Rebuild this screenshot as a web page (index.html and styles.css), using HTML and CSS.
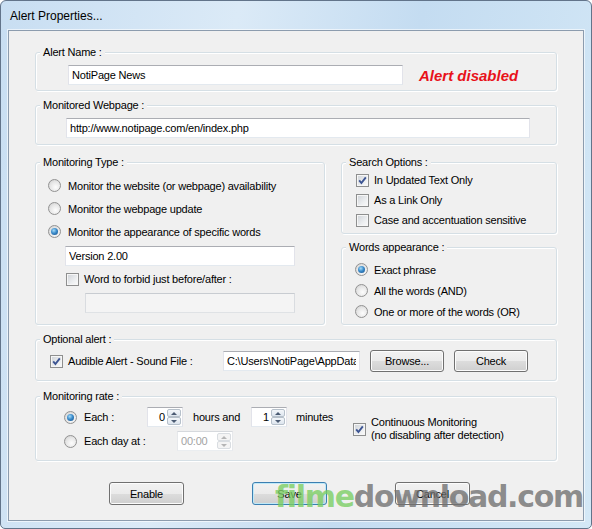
FILE: index.html
```html
<!DOCTYPE html>
<html lang="en">
<head>
  <meta charset="UTF-8" />
  <meta name="viewport" content="width=device-width, initial-scale=1.0" />
  <title>Alert Properties</title>
  <link rel="stylesheet" href="styles.css">
</head>
<body>
  <div class="window">
    <div class="titlebar">Alert Properties...</div>
    <div class="client">

      <div class="group group-name">
        <div class="group-title">Alert Name :</div>
        <div class="group-body">
          <input class="textbox name-box" type="text" value="NotiPage News">
          <span class="status">Alert disabled</span>
        </div>
      </div>

      <div class="group group-url">
        <div class="group-title">Monitored Webpage :</div>
        <div class="group-body">
          <input class="textbox url-box" type="text" value="http://www.notipage.com/en/index.php">
        </div>
      </div>

      <div class="columns">
        <div class="group group-type">
          <div class="group-title">Monitoring Type :</div>
          <div class="group-body">
            <label class="opt type-opt"><span class="radio"></span>Monitor the website (or webpage) availability</label>
            <label class="opt type-opt"><span class="radio"></span>Monitor the webpage update</label>
            <label class="opt type-opt"><span class="radio on"></span>Monitor the appearance of specific words</label>
            <input class="textbox words-box" type="text" value="Version 2.00">
            <label class="opt forbid-opt"><span class="check"></span>Word to forbid just before/after :</label>
            <input class="textbox forbid-box" type="text" disabled>
          </div>
        </div>

        <div class="side">
          <div class="group group-search">
            <div class="group-title">Search Options :</div>
            <div class="group-body">
              <label class="opt search-opt">
                <span class="check"><svg width="11" height="11" viewBox="0 0 11 11"><path d="M2.2 5.4 L4.4 8 L8.8 2.3" fill="none" stroke="#3d5593" stroke-width="1.9"/></svg></span>In Updated Text Only
              </label>
              <label class="opt search-opt"><span class="check"></span>As a Link Only</label>
              <label class="opt search-opt"><span class="check"></span>Case and accentuation sensitive</label>
            </div>
          </div>

          <div class="group group-words">
            <div class="group-title">Words appearance :</div>
            <div class="group-body">
              <label class="opt words-opt"><span class="radio on"></span>Exact phrase</label>
              <label class="opt words-opt"><span class="radio"></span>All the words (AND)</label>
              <label class="opt words-opt"><span class="radio"></span>One or more of the words (OR)</label>
            </div>
          </div>
        </div>
      </div>

      <div class="group group-sound">
        <div class="group-title">Optional alert :</div>
        <div class="group-body">
          <label class="opt sound-opt">
            <span class="check"><svg width="11" height="11" viewBox="0 0 11 11"><path d="M2.2 5.4 L4.4 8 L8.8 2.3" fill="none" stroke="#3d5593" stroke-width="1.9"/></svg></span>Audible Alert - Sound File :
          </label>
          <input class="textbox sound-box" type="text" value="C:\Users\NotiPage\AppData\Roaming\NotiPage\alert.wav">
          <button class="btn btn-small">Browse...</button>
          <button class="btn btn-small">Check</button>
        </div>
      </div>

      <div class="group group-rate">
        <div class="group-title">Monitoring rate :</div>
        <div class="group-body">
          <div class="rate-times">
            <div class="rate-row">
              <label class="opt each-opt"><span class="radio on"></span>Each :</label>
              <div class="spin">
                <span class="spin-value">0</span>
                <span class="spin-buttons"><span class="spin-up"></span><span class="spin-down"></span></span>
              </div>
              <span class="hours">hours and</span>
              <div class="spin">
                <span class="spin-value">1</span>
                <span class="spin-buttons"><span class="spin-up"></span><span class="spin-down"></span></span>
              </div>
              <span class="minutes">minutes</span>
            </div>
            <div class="rate-row">
              <label class="opt day-opt"><span class="radio"></span>Each day at :</label>
              <div class="spin spin-time disabled">
                <span class="spin-value">00:00</span>
                <span class="spin-buttons"><span class="spin-up"></span><span class="spin-down"></span></span>
              </div>
            </div>
          </div>
          <label class="opt continuous">
            <span class="check"><svg width="11" height="11" viewBox="0 0 11 11"><path d="M2.2 5.4 L4.4 8 L8.8 2.3" fill="none" stroke="#3d5593" stroke-width="1.9"/></svg></span>
            <span>Continuous Monitoring<br>(no disabling after detection)</span>
          </label>
        </div>
      </div>

      <div class="buttons">
        <button class="btn">Enable</button>
        <button class="btn btn-default">Save</button>
        <button class="btn">Cancel</button>
      </div>
    </div>

    <div class="watermark"><span class="wm-green">filme</span><span class="wm-gray">download.com</span></div>
  </div>
</body>
</html>
```

FILE: styles.css
```css
* {
  box-sizing: border-box;
}
body {
  margin: 0;
  background: #fff;
  font-family: "Liberation Sans", Arial, sans-serif;
  font-size: 11px;
  letter-spacing: -0.2px;
  color: #000;
}

/* window frame */
.window {
  position: relative;
  width: 592px;
  height: 529px;
  display: flex;
  flex-direction: column;
  padding: 0 7px 7px;
  border: 1px solid #62748a;
  border-radius: 6px 6px 5px 5px;
  background: linear-gradient(100deg, #c8def2 0%, #dbeaf7 35%, #c4dcf1 62%, #d4e8f6 100%);
  overflow: hidden;
}
.titlebar {
  height: 29px;
  display: flex;
  align-items: center;
  padding-left: 2px;
  font-size: 12px;
  letter-spacing: 0;
}
.client {
  flex: 1;
  padding: 21px 26px 0;
  background: #f0f0f0;
  border: 1px solid #8c9cae;
  box-shadow: 0 0 0 1px rgba(255, 255, 255, 0.6);
}

/* group boxes */
.group {
  border: 1px solid #d5dfe5;
  border-radius: 3px;
  box-shadow: inset 1px 1px 0 #fff, 1px 1px 0 #fff;
}
.group-title {
  width: fit-content;
  margin: -7px 0 0 4px;
  padding: 0 3px;
  line-height: 13px;
  background: #f0f0f0;
}
.group-name .group-body {
  display: flex;
  align-items: center;
  padding: 6px 0 5px 32px;
}
.group-url {
  margin-top: 14px;
}
.group-url .group-body {
  padding: 6px 0 6px 30px;
}
.columns {
  display: flex;
  align-items: flex-start;
  gap: 16px;
  margin-top: 17px;
}
.group-type {
  width: 290px;
}
.group-type .group-body {
  padding: 5px 0 11px 12px;
}
.side {
  width: 216px;
}
.group-search .group-body {
  padding: 1px 0 3px 14px;
}
.group-words {
  margin-top: 13px;
}
.group-words .group-body {
  padding: 5px 0 2px 13px;
}
.group-sound {
  margin-top: 14px;
}
.group-sound .group-body {
  display: flex;
  align-items: center;
  height: 22px;
  margin: 4px 0 8px;
  padding-left: 14px;
}
.group-rate {
  margin-top: 15px;
}
.group-rate .group-body {
  display: flex;
  align-items: center;
  padding: 4px 0 9px 28px;
}

/* inputs */
.textbox {
  display: block;
  height: 20px;
  padding: 0 3px;
  border: 1px solid;
  border-color: #abadb3 #e2e3ea #e3e9ef #e2e3ea;
  background: #fff;
  font: inherit;
  letter-spacing: inherit;
  color: #000;
  outline: none;
}
.textbox:disabled {
  background: #f4f4f4;
  border-color: #c8ccd1 #d9dce0 #dfe2e5 #d9dce0;
}
.name-box {
  width: 335px;
}
.status {
  margin-left: 16px;
  color: #e8121a;
  font-size: 15px;
  font-weight: bold;
  font-style: italic;
  letter-spacing: 0;
}
.url-box {
  width: 464px;
}
.words-box {
  width: 230px;
  margin: 3px 0 0 17px;
}
.forbid-box {
  width: 210px;
  margin: 4px 0 0 37px;
}
.sound-box {
  width: 137px;
}

/* options */
.opt {
  display: flex;
  align-items: center;
  white-space: nowrap;
}
.check {
  flex: none;
  width: 13px;
  height: 13px;
  border: 1px solid #8e8f8f;
  background: linear-gradient(135deg, #cdd1d6 0%, #eceef0 60%, #fbfbfb 100%);
  box-shadow: inset 0 0 0 1px #f6f6f6;
  margin-right: 5px;
}
.check svg {
  display: block;
}
.radio {
  flex: none;
  display: flex;
  align-items: center;
  justify-content: center;
  width: 13px;
  height: 13px;
  border-radius: 50%;
  border: 1px solid #929292;
  background: radial-gradient(circle at 60% 65%, #fdfdfd 0%, #e6e6e6 55%, #c9c9c9 100%);
  margin-right: 7px;
}
.radio.on::after {
  content: "";
  width: 7px;
  height: 7px;
  border-radius: 50%;
  background: radial-gradient(circle at 40% 35%, #a6dcf8 0%, #3c8ccb 45%, #0f4a86 100%);
}
.type-opt {
  height: 23px;
}
.forbid-opt {
  height: 20px;
  margin: 3px 0 0 18px;
}
.search-opt {
  height: 20px;
}
.words-opt {
  height: 21px;
}
.words-opt .radio {
  margin-right: 6px;
}
.sound-opt {
  width: 173px;
}

/* monitoring rate */
.rate-times {
  width: 289px;
}
.rate-row {
  display: flex;
  align-items: center;
  height: 20px;
}
.rate-row + .rate-row {
  margin-top: 4px;
}
.each-opt {
  width: 83px;
}
.day-opt {
  width: 113px;
}
.hours {
  width: 68px;
  padding-left: 10px;
}
.minutes {
  margin-left: 9px;
}
.continuous {
  line-height: 13px;
}
.spin {
  display: flex;
  width: 36px;
  height: 20px;
  padding: 1px;
  border: 1px solid;
  border-color: #abadb3 #e2e3ea #e3e9ef #e2e3ea;
  background: #fff;
}
.spin-value {
  flex: 1;
  text-align: right;
  padding-right: 2px;
  line-height: 16px;
}
.spin-buttons {
  width: 14px;
  display: flex;
  flex-direction: column;
}
.spin-up,
.spin-down {
  flex: 1;
  display: flex;
  align-items: center;
  justify-content: center;
  border: 1px solid #b6c0ca;
  border-radius: 2px;
  background: linear-gradient(#f4f7fa, #dde5ee);
}
.spin-up::after,
.spin-down::after {
  content: "";
  border-left: 3px solid transparent;
  border-right: 3px solid transparent;
}
.spin-up::after {
  border-bottom: 3px solid #4b5b73;
}
.spin-down::after {
  border-top: 3px solid #4b5b73;
}
.spin-time {
  width: 56px;
}
.spin.disabled {
  border-color: #d6d9dd #e6e8eb #eaedf0 #e6e8eb;
}
.spin.disabled .spin-value {
  text-align: left;
  padding-left: 2px;
  color: #a3a3a3;
}
.spin.disabled .spin-up,
.spin.disabled .spin-down {
  border-color: #d9dde1;
  background: #f4f4f4;
}
.spin.disabled .spin-up::after {
  border-bottom-color: #b5b5b5;
}
.spin.disabled .spin-down::after {
  border-top-color: #b5b5b5;
}

/* push buttons */
.btn {
  width: 75px;
  height: 23px;
  padding: 0;
  border: 1px solid #707070;
  border-radius: 3px;
  background: linear-gradient(#f2f2f2 0%, #ebebeb 50%, #dddddd 50%, #cfcfcf 100%);
  box-shadow: inset 0 0 0 1px #fcfcfc;
  font: inherit;
  letter-spacing: inherit;
  color: #000;
}
.btn-small {
  width: 74px;
  height: 22px;
  margin-left: 10px;
}
.btn-default {
  border-color: #3c7fb1;
  box-shadow: inset 0 0 0 1px #bfe9f8;
}
.buttons {
  display: flex;
  gap: 68px;
  margin: 21px 0 0 74px;
}

/* site stamp over the lower right corner */
.watermark {
  position: absolute;
  left: 274px;
  top: 481px;
  font-family: "DejaVu Sans", sans-serif;
  font-weight: bold;
  font-size: 30px;
  line-height: 30px;
  letter-spacing: -1.3px;
  white-space: nowrap;
  pointer-events: none;
}
.wm-green {
  color: rgba(122, 206, 98, 0.8);
}
.wm-gray {
  color: rgba(112, 112, 112, 0.8);
}
```
